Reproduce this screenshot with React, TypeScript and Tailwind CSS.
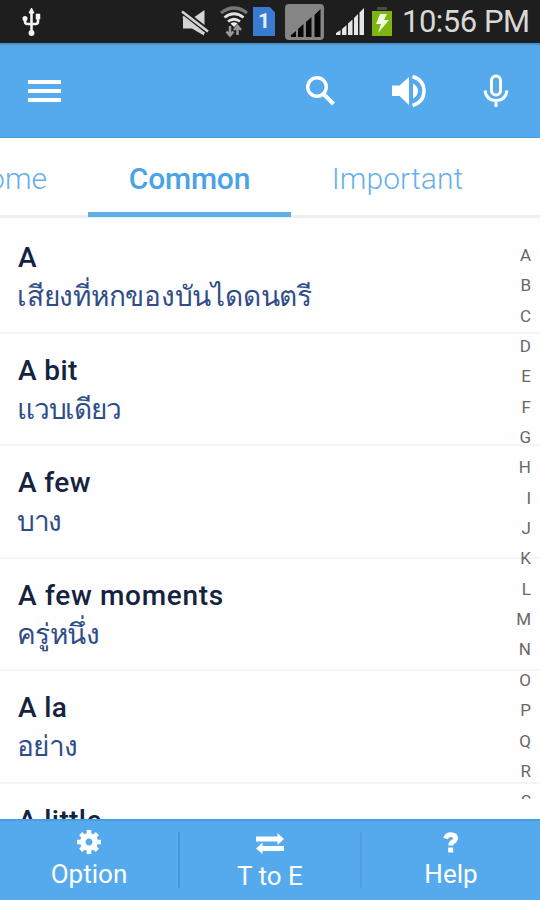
import React from "react";

const words = [
  { en: "A", th: "เสียงที่หกของบันไดดนตรี", enTracking: "tracking-[0.4px]", thTracking: "tracking-[-0.23px]" },
  { en: "A bit", th: "แวบเดียว", enTracking: "tracking-[0.4px]", thTracking: "tracking-[-1.25px]" },
  { en: "A few", th: "บาง", enTracking: "tracking-[0.4px]", thTracking: "tracking-[-1.3px]" },
  { en: "A few moments", th: "ครู่หนึ่ง", enTracking: "tracking-[0.7px]", thTracking: "tracking-[-0.6px]" },
  { en: "A la", th: "อย่าง", enTracking: "tracking-[0.4px]", thTracking: "tracking-[-0.7px]" },
  { en: "A little", th: "", enTracking: "tracking-[0.4px]", thTracking: "tracking-normal" },
];

const letters = "ABCDEFGHIJKLMNOPQRS".split("");

function StatusBar() {
  return (
    <div className="flex h-[43px] shrink-0 items-center bg-[#1e1e1e] text-[#d8d8d8]">
      <svg className="ml-[21px] h-[32px] w-[22px]" viewBox="0 0 22 32" fill="none" stroke="#f4f4f4" strokeWidth="2.6">
        <path d="M10.5 5V27M4 11v4.5q0 2.5 2.5 2.5h8q2.5 0 2.5-2.5V10" />
        <path d="M10.5 2l2.5 5h-5z" fill="#f4f4f4" strokeWidth="1" />
        <circle cx="4" cy="12.5" r="1.8" fill="#f4f4f4" strokeWidth="1.5" />
        <path d="M15.5 8.5h3v4h-3z" fill="#f4f4f4" strokeWidth="1.5" />
        <circle cx="10.5" cy="27" r="2.2" fill="#f4f4f4" strokeWidth="1.5" />
      </svg>
      <svg className="ml-[137px] h-[30px] w-[30px]" viewBox="0 0 30 30">
        <path d="M14.500 10L24.500 3v15z" fill="#d4d4d4" />
        <path d="M3 10.500L24 26.500v2L12 21.500H3z" fill="#d4d4d4" />
        <path d="M2 4.500L28 24.500" stroke="#d4d4d4" strokeWidth="2.600" />
        <path d="M3 9.500L24.500 26.500" stroke="#d4d4d4" strokeWidth="2" />
      </svg>
      <svg className="ml-[9px] h-[32px] w-[30px]" viewBox="0 0 30 32" fill="none">
        <path d="M2 7Q15-3 28 7" stroke="#777" strokeWidth="3.2" />
        <path d="M5.5 11.5Q15 4 24.500 11.500M9 15.500Q15 11 21 15.500" stroke="#e2e2e2" strokeWidth="2.8" />
        <path d="M11.500 17.500q3.500-2.500 7 0L15 21z" fill="#eee" />
        <path d="M11 20v9M7.500 25.500L11 29.500l3.500-4M18.500 29v-9M15 24l3.500-4 3.500 4" stroke="#999" strokeWidth="2.5" />
      </svg>
      <div className="ml-[4px] flex h-[29px] w-[22px] items-center justify-center bg-[#3a7bd2] font-['Roboto'] text-[21px] font-bold text-[#e4edf8] [clip-path:polygon(0_0,76%_0,100%_18%,100%_100%,0_100%)]">1</div>
      <svg className="ml-[9px] h-[36px] w-[40px]" viewBox="0 0 40 36">
        <rect x="1" y="0" width="39" height="36" rx="4" fill="#858585" />
        <path d="M7 33v-2l5-4v6zM14 33v-8l5.500-5v13zM22 33V18l5.500-5v20zM30.500 33V11l6-6v28z" fill="#080808" />
      </svg>
      <svg className="ml-[11px] h-[30px] w-[30px]" viewBox="0 0 30 30">
        <path d="M1 28v-2l4.500-3v5zM7 28v-6l4.500-4v10zM13 28V16.500l4.500-4v15.500zM19 28V11l4-4v21zM24.500 28V5.500l4.500-4.500v27z" fill="#e5e5e5" />
      </svg>
      <svg className="ml-[6px] h-[31px] w-[22px]" viewBox="0 0 22 31">
        <path d="M6 1h10v3H6z" fill="#4a4a4a" />
        <path d="M1 5h20v25H1z" fill="#7fb511" />
        <path d="M9 8h7l-3 6h5L7 27l3-9H5z" fill="#f1f7e5" />
      </svg>
      <span className="ml-[9px] mt-[1px] whitespace-nowrap text-[31px] leading-[36px] tracking-[-0.5px]">10:56 PM</span>
    </div>
  );
}

function AppBar() {
  return (
    <header className="flex h-[95px] shrink-0 items-center border-b border-t-2 border-b-[#4a9ddd] border-t-[#4a90cb] bg-[#55aaee]">
      <div className="ml-[28px] mt-[-1px] flex w-[33px] flex-col gap-[5px]">
        <span className="h-1 bg-white" />
        <span className="h-1 bg-white" />
        <span className="h-1 bg-white" />
      </div>
      <svg className="ml-[244px] h-[30px] w-[30px]" viewBox="0 0 30 30" fill="none" stroke="white">
        <circle cx="12" cy="11" r="9.300" strokeWidth="3.400" />
        <path d="M18 17.500L28.500 28" strokeWidth="4" />
      </svg>
      <svg className="ml-[56px] h-[34px] w-[36px]" viewBox="0 0 36 34">
        <path d="M1 11.500h7.500L18 3v28L8.500 22H1z" fill="white" />
        <path d="M22 9.500q5 3 5 7.500t-5 7.500z" fill="white" />
        <path d="M21.500 2.500Q33 6 33 17t-11.500 14.500" stroke="white" strokeWidth="3.500" fill="none" />
      </svg>
      <svg className="ml-[56px] h-[34px] w-[26px]" viewBox="0 0 26 34" fill="none" stroke="white" strokeWidth="3">
        <rect x="8.500" y="2" width="9" height="19" rx="4.500" />
        <path d="M2 16.500q1.500 10 11 10t11-10M13 26.500V33" />
      </svg>
    </header>
  );
}

function Tabs() {
  return (
    <nav className="flex h-[80px] shrink-0 border-b-[3px] border-[#efefef] bg-white text-[30px] leading-[82px] text-[#67b0ea]">
      <div className="flex w-[88px] justify-end pr-[41px] font-light">
        <span>Home</span>
      </div>
      <div className="h-[79px] w-[203px] border-b-[5px] border-[#5fafe9] text-center font-medium tracking-[-0.2px] text-[#4aa3e6]">
        Common
      </div>
      <div className="w-[213px] text-center font-light tracking-[0.1px]">Important</div>
    </nav>
  );
}

function GearIcon() {
  return (
    <svg className="h-[24px] w-[24px]" viewBox="-12 -12 24 24" fill="none" stroke="white">
      <circle r="6.200" strokeWidth="5.400" />
      <path
        d="M0-7V-12M0 7V12M-7 0H-12M7 0H12M4.950-4.950L8.300-8.300M4.950 4.950L8.300 8.300M-4.950 4.950L-8.300 8.300M-4.950-4.950L-8.300-8.300"
        strokeWidth="4.600"
      />
    </svg>
  );
}

function BottomBar() {
  return (
    <footer className="flex h-[81px] shrink-0 border-t-2 border-[#459fe1] bg-[#55aaee] text-[26px] leading-[30px] text-white">
      <div className="flex w-[178px] flex-col items-center pt-[9px]">
        <GearIcon />
        <span className="mt-[5px]">Option</span>
      </div>
      <div className="mt-[11px] h-[56px] w-[2px] bg-[#4497dc]" />
      <div className="flex w-[180px] flex-col items-center pt-[12px]">
        <svg className="h-[21px] w-[28px]" viewBox="0 0 28 21" fill="white">
          <path d="M0 3.500h21.500V0L28 6l-6.500 6V8.500H0zM28 18H6.500v3L0 15.500l6.500-6V13H28z" />
        </svg>
        <span className="mt-[7px]">T to E</span>
      </div>
      <div className="mt-[11px] h-[56px] w-[2px] bg-[#4d9fe2]" />
      <div className="flex flex-1 flex-col items-center pt-[11px]">
        <svg className="h-[21px] w-[16px]" viewBox="0 0 16 21" fill="none">
          <path d="M2.500 6.500Q4 2.600 7.800 2.600q4.700 0 4.700 3.600 0 2.300-2.700 3.600-2.100 1.200-2.100 3.700" stroke="white" strokeWidth="4.800" />
          <path d="M5.200 15.500h5v5h-5z" fill="white" />
        </svg>
        <span className="mt-[6px]">Help</span>
      </div>
    </footer>
  );
}

export default function App() {
  return (
    <div className="flex h-[900px] w-[540px] flex-col overflow-hidden bg-white font-['Roboto','Noto_Sans',sans-serif]">
      <StatusBar />
      <AppBar />
      <Tabs />
      <main className="relative h-[601px] shrink-0 overflow-hidden bg-[#fefefe] pt-[3px]">
        {words.map((word) => (
          <div key={word.en} className="flex h-[112.500px] flex-col border-b-2 border-[#f4f4f4] pl-[18px] pt-[19px]">
            <span className={`text-[28px] font-medium leading-[36px] text-[#14233f] ${word.enTracking}`}>{word.en}</span>
            <span className={`ml-[-1px] mt-[1px] whitespace-nowrap text-[28px] leading-[40px] text-[#304d88] ${word.thTracking}`}>{word.th}</span>
          </div>
        ))}
        <div className="absolute right-[9px] top-[22px] flex h-[559px] w-[16px] flex-col overflow-hidden text-right text-[17px] leading-[30.350px] text-[#686868]">
          {letters.map((letter) => (
            <span key={letter} className="h-[30.350px] shrink-0">{letter}</span>
          ))}
        </div>
      </main>
      <BottomBar />
    </div>
  );
}
